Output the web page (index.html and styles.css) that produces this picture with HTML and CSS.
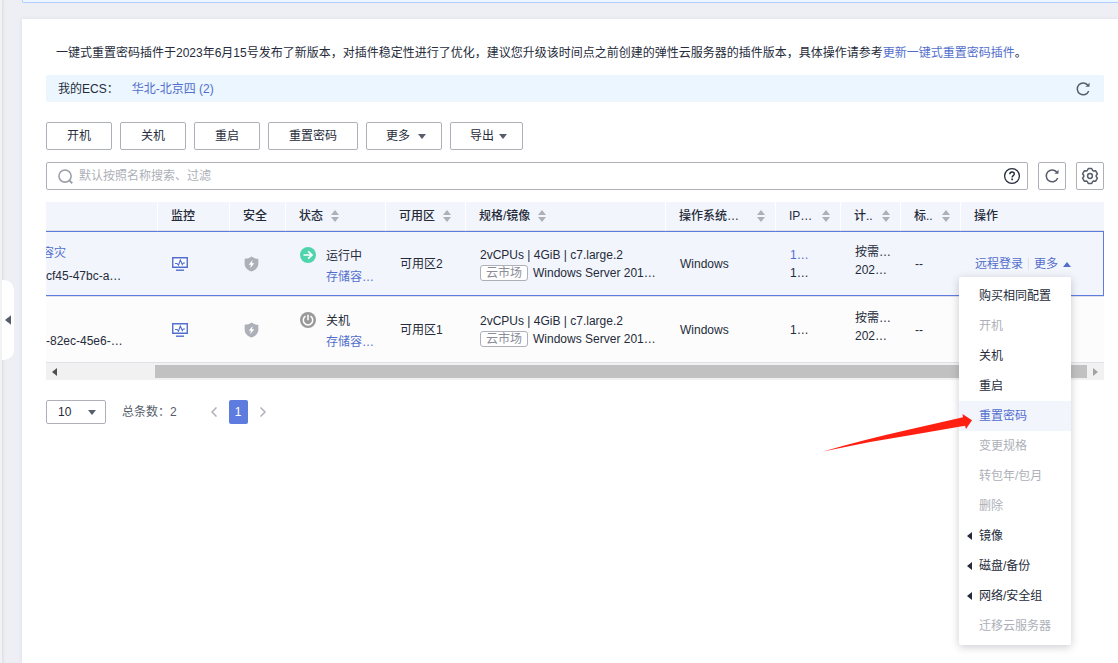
FILE: index.html
```html
<!DOCTYPE html>
<html lang="zh-CN">
<head>
<meta charset="utf-8">
<title>弹性云服务器</title>
<link rel="stylesheet" href="styles.css">
</head>
<body>
<svg class="defs" aria-hidden="true">
  <symbol id="i-refresh" viewBox="0 0 16 16"><path d="M13 4.500A5.900 5.900 0 1 0 13.700 10" fill="none" stroke="currentColor" stroke-width="1.500"/><path d="M14.500 1.500v4.300h-4.200l1.700-1.300 1-1z" fill="currentColor"/></symbol>
  <symbol id="i-sort" viewBox="0 0 8 12"><path d="M4 0l4 5H0zM4 12l4-5H0z" fill="#adb0b8"/></symbol>
  <symbol id="i-down" viewBox="0 0 8 5"><path d="M0 0h8L4 5z" fill="currentColor"/></symbol>
  <symbol id="i-left" viewBox="0 0 5 8"><path d="M5 0v8L0 4z" fill="currentColor"/></symbol>
  <symbol id="i-monitor" viewBox="0 0 16 14"><path d="M.75.75h14.500v9.500H.75z" fill="#fff" stroke="#526ecc" stroke-width="1.400"/><path d="M3 6.500h2l1.500 1.700L8.300 3l2 4.500 1-1.500H13" fill="none" stroke="#526ecc" stroke-width="1.100"/><path d="M4 13.200h8" stroke="#526ecc" stroke-width="1.400"/></symbol>
  <symbol id="i-shield" viewBox="0 0 16 16"><path d="M8 0c2 1.500 4.500 2.300 7.300 2.500v5.200c0 4-3 6.800-7.300 8.300C3.700 14.500.7 11.700.7 7.700V2.500C3.500 2.300 6 1.500 8 0z" fill="#adb0b8"/><path d="M9.200 3.800L5 8.800h2.400l-.8 3.700L11 7.300H8.500z" fill="#fff"/></symbol>
</svg>
<aside class="rail">
  <button class="rail-handle" type="button" aria-label="展开侧栏"><svg class="ic-handle"><use href="#i-left"/></svg></button>
</aside>
<main class="main">
  <div class="banner"></div>
  <section class="card">
    <p class="notice">一键式重置密码插件于2023年6月15号发布了新版本，对插件稳定性进行了优化，建议您升级该时间点之前创建的弹性云服务器的插件版本，具体操作请参考<a href="#">更新一键式重置密码插件</a>。</p>
    <div class="region">
      <span>我的ECS：</span><a href="#">华北-北京四 (2)</a>
      <button class="bare push" type="button" aria-label="刷新"><svg class="ic16"><use href="#i-refresh"/></svg></button>
    </div>
    <div class="actions">
      <button class="btn" type="button">开机</button>
      <button class="btn" type="button">关机</button>
      <button class="btn" type="button">重启</button>
      <button class="btn" type="button">重置密码</button>
      <button class="btn drop" type="button">更多<svg class="ic-down"><use href="#i-down"/></svg></button>
      <button class="btn export" type="button">导出<svg class="ic-down"><use href="#i-down"/></svg></button>
    </div>
    <div class="filter">
      <div class="search">
        <svg class="ic-search" viewBox="0 0 16 16"><circle cx="7.500" cy="7.500" r="6.500" fill="none" stroke="#9b9fa8" stroke-width="1.700"/><path d="M11.800 11.800l3.400 3.400" stroke="#9b9fa8" stroke-width="2"/></svg>
        <input type="text" aria-label="搜索" placeholder="默认按照名称搜索、过滤">
        <button class="bare" type="button" aria-label="帮助"><svg class="ic18" viewBox="0 0 18 18"><circle cx="9" cy="9" r="7.400" fill="none" stroke="#252b3a" stroke-width="1.300"/><path d="M6.800 7.200C6.800 5.800 7.700 5 9 5s2.300.8 2.300 2c0 1.600-2.200 1.700-2.200 3.400" fill="none" stroke="#252b3a" stroke-width="1.400"/><path d="M8.300 11.600h1.600v1.600H8.300z" fill="#252b3a"/></svg></button>
      </div>
      <button class="btn square" type="button" aria-label="刷新列表"><svg class="ic16"><use href="#i-refresh"/></svg></button>
      <button class="btn square" type="button" aria-label="设置"><svg class="ic18" viewBox="0 0 18 18"><path d="M7.300 1.500h3.400l.9 1.900 1 .6 2.100-.2 1.700 3-1.200 1.700v1l1.200 1.700-1.700 3-2.100-.2-1 .6-.9 1.900H7.300l-.9-1.900-1-.6-2.100.2-1.700-3 1.200-1.700v-1L1.600 6.800l1.700-3 2.100.2 1-.6z" fill="none" stroke="currentColor" stroke-width="1.500" stroke-linejoin="round"/><circle cx="9" cy="9" r="2.400" fill="none" stroke="currentColor" stroke-width="1.500"/></svg></button>
    </div>
    <table class="grid">
      <colgroup><col class="w112"><col class="w72"><col class="w56"><col class="w100"><col class="w80"><col class="w200"><col class="w110"><col class="w65"><col class="w60"><col class="w60"><col></colgroup>
      <thead>
        <tr>
          <th></th><th>监控</th><th>安全</th>
          <th>状态<svg class="ic-sort"><use href="#i-sort"/></svg></th>
          <th>可用区<svg class="ic-sort"><use href="#i-sort"/></svg></th>
          <th>规格/镜像<svg class="ic-sort"><use href="#i-sort"/></svg></th>
          <th><div class="split">操作系统…<svg class="ic-sort"><use href="#i-sort"/></svg></div></th>
          <th><div class="split">IP…<svg class="ic-sort"><use href="#i-sort"/></svg></div></th>
          <th><div class="split">计..<svg class="ic-sort"><use href="#i-sort"/></svg></div></th>
          <th><div class="split">标..<svg class="ic-sort"><use href="#i-sort"/></svg></div></th>
          <th>操作</th>
        </tr>
      </thead>
      <tbody>
        <tr class="active">
          <td class="name"><div class="stack wide"><a class="cut" href="#">容灾</a><span>cf45-47bc-a…</span></div></td>
          <td><svg class="ic-monitor"><use href="#i-monitor"/></svg></td>
          <td><svg class="ic-shield"><use href="#i-shield"/></svg></td>
          <td><div class="status"><svg class="ic16" viewBox="0 0 16 16"><circle cx="8" cy="8" r="8" fill="#50d4ab"/><path d="M3.500 8h8M8.200 4.300L12 8l-3.800 3.700" fill="none" stroke="#fff" stroke-width="1.700"/></svg><div class="stack mid"><span>运行中</span><a href="#">存储容…</a></div></div></td>
          <td>可用区2</td>
          <td><div class="stack"><span>2vCPUs | 4GiB | c7.large.2</span><span class="image"><em class="tag">云市场</em>Windows Server 201…</span></div></td>
          <td>Windows</td>
          <td><div class="stack"><a href="#">1…</a><span>1…</span></div></td>
          <td><div class="stack bill"><span>按需…</span><span>202…</span></div></td>
          <td>--</td>
          <td class="ops-cell">
            <div class="ops">
              <a href="#">远程登录</a>
              <div class="more">
                <button class="bare link" type="button" aria-expanded="true">更多<svg class="ic-up" viewBox="0 0 8 5"><path d="M0 5h8L4 0z" fill="currentColor"/></svg></button>
                <ul class="menu">
                  <li><button type="button">购买相同配置</button></li>
                  <li><button type="button" disabled>开机</button></li>
                  <li><button type="button">关机</button></li>
                  <li><button type="button">重启</button></li>
                  <li class="current"><button type="button">重置密码</button><svg class="pointer" viewBox="0 0 150 40"><path d="M0 39.500Q40 28 83 18.300L140 5.200 139.500 2l9.500 6.300-6 8.700-1-3.300L90 22.700Q45 29.500 0 39.500z" fill="#ff2012"/></svg></li>
                  <li><button type="button" disabled>变更规格</button></li>
                  <li><button type="button" disabled>转包年/包月</button></li>
                  <li><button type="button" disabled>删除</button></li>
                  <li><button class="parent" type="button"><svg class="ic-left"><use href="#i-left"/></svg>镜像</button></li>
                  <li><button class="parent" type="button"><svg class="ic-left"><use href="#i-left"/></svg>磁盘/备份</button></li>
                  <li><button class="parent" type="button"><svg class="ic-left"><use href="#i-left"/></svg>网络/安全组</button></li>
                  <li><button type="button" disabled>迁移云服务器</button></li>
                </ul>
              </div>
            </div>
          </td>
        </tr>
        <tr>
          <td class="name"><div class="stack wide"><span>&nbsp;</span><span>-82ec-45e6-…</span></div></td>
          <td><svg class="ic-monitor"><use href="#i-monitor"/></svg></td>
          <td><svg class="ic-shield"><use href="#i-shield"/></svg></td>
          <td><div class="status"><svg class="ic16" viewBox="0 0 16 16"><circle cx="8" cy="8" r="8" fill="#999"/><path d="M5.500 4.200a4.700 4.700 0 1 0 5 0M8 2.800v5.400" fill="none" stroke="#fff" stroke-width="1.500"/></svg><div class="stack mid"><span>关机</span><a href="#">存储容…</a></div></div></td>
          <td>可用区1</td>
          <td><div class="stack"><span>2vCPUs | 4GiB | c7.large.2</span><span class="image"><em class="tag">云市场</em>Windows Server 201…</span></div></td>
          <td>Windows</td>
          <td>1…</td>
          <td><div class="stack bill"><span>按需…</span><span>202…</span></div></td>
          <td>--</td>
          <td></td>
        </tr>
      </tbody>
    </table>
    <div class="scroll">
      <svg class="ic-scroll" viewBox="0 0 5 8"><path d="M5 0v8L0 4z" fill="#505050"/></svg>
      <div class="thumb"></div>
      <svg class="ic-scroll" viewBox="0 0 5 8"><path d="M0 0v8l5-4z" fill="#a3a3a3"/></svg>
    </div>
    <nav class="pager" aria-label="分页">
      <div class="size">
        <select aria-label="每页条数"><option>10</option></select>
        <svg class="ic-down"><use href="#i-down"/></svg>
      </div>
      <span class="total">总条数：2</span>
      <button class="bare step" type="button" aria-label="上一页"><svg class="ic-step" viewBox="0 0 6 10"><path d="M5.500.5L1 5l4.500 4.500" fill="none" stroke="currentColor" stroke-width="1.500"/></svg></button>
      <button class="page" type="button">1</button>
      <button class="bare step" type="button" aria-label="下一页"><svg class="ic-step" viewBox="0 0 6 10"><path d="M.5.5L5 5 .5 9.500" fill="none" stroke="currentColor" stroke-width="1.500"/></svg></button>
    </nav>
  </section>
</main>
</body>
</html>
```
FILE: styles.css
```css
* { box-sizing: border-box; }
body {
  margin: 0;
  min-height: 100vh;
  display: flex;
  background: #eeeff5;
  color: #252b3a;
  font: 12px/18px "Liberation Sans", "Noto Sans CJK SC", sans-serif;
}
a { color: #526ecc; text-decoration: none; }
button, input, select { font: inherit; color: inherit; }
button { padding: 0; cursor: pointer; }
svg { display: block; flex: none; }
.defs { position: absolute; width: 0; height: 0; }

.rail {
  flex: none;
  width: 22px;
  border-left: 2px solid #f2f2f3;
  box-shadow: inset 3px 0 3px -2px #d9dae2;
}
.rail-handle {
  display: flex;
  align-items: center;
  width: 12px;
  height: 80px;
  margin-top: 280px;
  padding-left: 3px;
  border: 0;
  border-radius: 0 10px 10px 0;
  background: #fff;
  color: #575d6c;
}
.ic-handle { width: 6px; height: 10px; }

.main { flex: 1; min-width: 0; display: flex; flex-direction: column; }
.banner {
  height: 3px;
  margin-bottom: 16px;
  border: solid #b3ccff;
  border-width: 0 0 1px 1px;
  border-radius: 0 0 0 2px;
  background: #ebf6ff;
}
.card {
  flex: 1;
  padding: 24px 14px 24px 24px;
  background: #fff;
  box-shadow: 0 0 4px #dcdde6;
}
.notice { margin: 0 0 12px; padding-left: 10px; line-height: 20px; }
.region {
  display: flex;
  align-items: center;
  gap: 13px;
  height: 27px;
  margin-bottom: 20px;
  padding: 0 13px 0 12px;
  border-radius: 2px;
  background: #ebf6ff;
}
.push { margin-left: auto; }
.bare { display: flex; align-items: center; border: 0; background: none; color: #575d6c; }
.ic16 { width: 16px; height: 16px; }
.ic18 { width: 18px; height: 18px; }
.ic-down { width: 8px; height: 5px; color: #575d6c; }

.actions { display: flex; gap: 8px; margin-bottom: 12px; }
.btn {
  display: flex;
  align-items: center;
  justify-content: center;
  gap: 8px;
  height: 28px;
  padding: 0 20px;
  border: 1px solid #adb0b8;
  border-radius: 2px;
  background: #fff;
}
.drop { padding: 0 15px 0 19px; }
.export { gap: 5px; padding: 0 15px 0 19px; }

.filter { display: flex; gap: 10px; margin-bottom: 12px; }
.search {
  flex: 1;
  display: flex;
  align-items: center;
  gap: 6px;
  height: 28px;
  padding: 0 6px 0 11px;
  border: 1px solid #adb0b8;
  border-radius: 2px;
}
.search input { flex: 1; min-width: 0; padding: 0; border: 0; outline: 0; background: none; }
.search input::placeholder { color: #adb0b8; }
.ic-search { width: 15px; height: 15px; }
.filter .square { width: 28px; padding: 0; color: #575d6c; }

.grid { width: 100%; table-layout: fixed; border-collapse: separate; border-spacing: 0; }
.w56 { width: 56px; }
.w60 { width: 60px; }
.w65 { width: 65px; }
.w72 { width: 72px; }
.w80 { width: 80px; }
.w100 { width: 100px; }
.w110 { width: 110px; }
.w112 { width: 112px; }
.w200 { width: 200px; }
.grid th {
  height: 29px;
  padding: 0 0 0 13px;
  border-right: 1px solid #fff;
  border-bottom: 1px solid #dfe1e6;
  background: #f2f5fc;
  font-weight: 500;
  text-align: left;
  white-space: nowrap;
}
.grid th:last-child { border-right: 0; }
.ic-sort { display: inline-block; width: 8px; height: 12px; margin-left: 8px; vertical-align: -2px; }
.split { display: flex; align-items: center; justify-content: space-between; padding-right: 10px; }
.grid td {
  height: 66px;
  padding: 0 0 0 14px;
  border-bottom: 1px solid #dfe1e6;
  background: #fcfcfc;
  vertical-align: middle;
  white-space: nowrap;
}
.active td { border-top: 1px solid #5e7ce0; background: #f2f5fc; box-shadow: inset 0 -1px #5e7ce0; }
.active td:last-child { box-shadow: inset -1px -1px #5e7ce0; }
.grid td.name { padding: 0; overflow: hidden; }
.stack { display: flex; flex-direction: column; }
.wide { gap: 5px; }
.mid { gap: 3px; }
.bill { padding-bottom: 6px; }
.cut { margin-left: -4px; }
.ic-monitor { width: 16px; height: 14px; }
.ic-shield { width: 15px; height: 16px; }
.status { display: flex; align-items: flex-start; gap: 10px; padding-top: 4px; }
.image { display: flex; align-items: center; gap: 5px; }
.tag {
  padding: 0 5px;
  border: 1px solid #adb0b8;
  border-radius: 3px;
  background: #fff;
  color: #8a8e99;
  font-style: normal;
  line-height: 14px;
}

.ops { display: flex; align-items: center; }
.more { position: relative; margin-left: 5px; padding-left: 6px; }
.more::before { content: ""; position: absolute; left: 0; top: 3px; bottom: 3px; border-left: 1px solid #dfe1e6; }
.link { gap: 5px; color: #526ecc; }
.ic-up { width: 8px; height: 5px; }
.menu {
  position: absolute;
  right: 0;
  top: 22px;
  z-index: 2;
  width: 112px;
  margin: 0;
  padding: 4px 0;
  border-radius: 2px;
  background: #fff;
  box-shadow: 0 2px 8px rgba(37, 43, 58, 0.24);
  list-style: none;
}
.menu button {
  display: flex;
  align-items: center;
  width: 100%;
  height: 30px;
  padding: 0 0 0 20px;
  border: 0;
  background: none;
}
.menu button:disabled { color: #adb0b8; }
.menu .parent { gap: 7px; padding-left: 8px; }
.ic-left { width: 5px; height: 8px; }
.current { position: relative; background: #f2f5fc; color: #526ecc; }
.pointer { position: absolute; left: -136px; top: 11px; width: 150px; height: 40px; pointer-events: none; }

.scroll {
  display: flex;
  align-items: center;
  justify-content: space-between;
  height: 17px;
  margin-bottom: 20px;
  padding: 0 6px;
  background: #f1f1f1;
}
.thumb { flex: 1; height: 13px; margin: 0 6px 0 98px; background: #c1c1c1; }
.ic-scroll { width: 5px; height: 8px; }

.pager { display: flex; align-items: center; height: 24px; color: #575d6c; }
.size {
  display: flex;
  align-items: center;
  width: 60px;
  height: 24px;
  padding-right: 9px;
  border: 1px solid #adb0b8;
  border-radius: 2px;
}
.size select {
  flex: 1;
  min-width: 0;
  padding: 0 0 0 11px;
  border: 0;
  outline: 0;
  appearance: none;
  background: none;
  color: #252b3a;
}
.total { margin: 0 32px 0 16px; }
.step { justify-content: center; width: 10px; height: 24px; color: #adb0b8; }
.ic-step { width: 6px; height: 10px; }
.page {
  width: 19px;
  height: 24px;
  margin: 0 10px;
  border: 0;
  border-radius: 2px;
  background: #5e7ce0;
  color: #fff;
}
```
